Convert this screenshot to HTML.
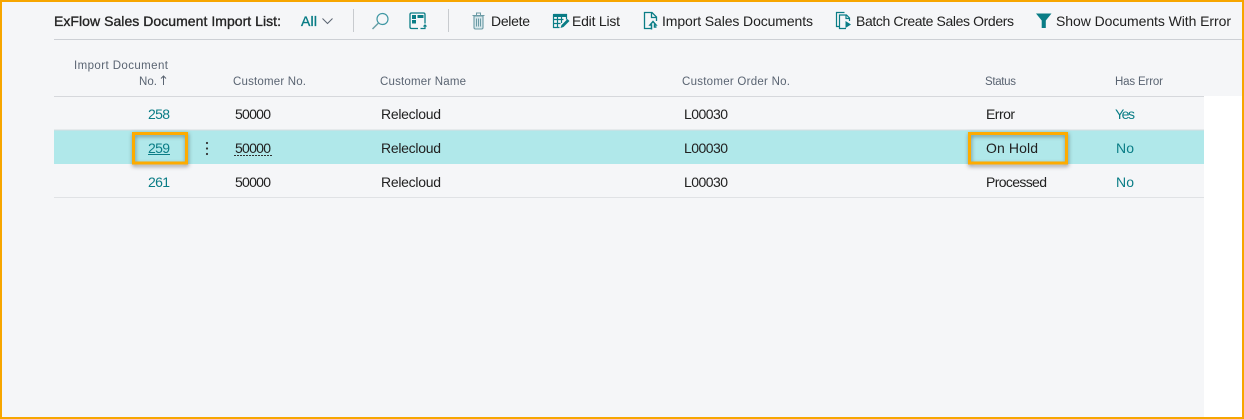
<!DOCTYPE html>
<html><head><meta charset="utf-8"><title>ExFlow Sales Document Import List</title>
<style>
html,body{margin:0;padding:0;width:1244px;height:419px;overflow:hidden;background:#f5f6f8}
svg{display:block}
text{font-family:"Liberation Sans",sans-serif;font-size:14px;fill:#212121}
.h{font-size:11.5px;fill:#5a6472}
.t{fill:#0a7d86}
.b{fill:none;stroke:#0a7d86;stroke-width:1.2}
.sb{stroke:#252525;stroke-width:.35px;fill:#252525}
.sbt{stroke:#0a7d86;stroke-width:.35px;fill:#0a7d86}
</style></head><body>
<svg width="1244" height="419" viewBox="0 0 1244 419" xmlns="http://www.w3.org/2000/svg">
<defs><filter id="s" x="-20%" y="-30%" width="140%" height="170%"><feGaussianBlur stdDeviation="2"/></filter></defs>
<rect width="1244" height="419" fill="#f5f6f8"/>
<rect x="1204" y="96" width="40" height="323" fill="#fff"/>
<rect x="54" y="39" width="1190" height="1" fill="#cdd0d5"/>
<rect x="54" y="96" width="1150" height="1" fill="#d6d8dc"/>
<rect x="54" y="130" width="1150" height="34" fill="#b0e8ea"/>
<rect x="54" y="129.500" width="1150" height="1" fill="#d8dde0"/>
<rect x="54" y="197" width="1150" height="1" fill="#e0e2e5"/>

<text class="sb" x="54" y="26" textLength="227" lengthAdjust="spacing">ExFlow Sales Document Import List:</text>
<text class="sbt" x="301" y="26" textLength="16" lengthAdjust="spacing">All</text>
<path d="M322.500 18.500l5 5 5-5" fill="none" stroke="#5a6472" stroke-width="1"/>
<rect x="353" y="9" width="1" height="23" fill="#c8cbcf"/>
<rect x="448" y="9" width="1" height="23" fill="#c8cbcf"/>

<!-- search -->
<circle cx="382.500" cy="19" r="5.500" fill="none" stroke="#3f97a3" stroke-width="1.200"/>
<path d="M378.500 23l-6 6" stroke="#6aa0a8" stroke-width="1.500" fill="none"/>
<!-- layout icon -->
<path class="b" style="stroke-width:1.300" d="M418 28.500h-6.500q-1.500 0-1.500-1.500v-12.500q0-1.500 1.500-1.500h12q1.500 0 1.500 1.500v9"/>
<rect x="412" y="15" width="4" height="4" fill="#0a7d86"/>
<rect x="412" y="20" width="4" height="3.500" fill="#0a7d86"/>
<rect x="417.500" y="15" width="6" height="3" fill="#0a7d86"/>
<path class="b" d="M420.500 28.500h4.500v-3M423.500 26.500l1.500-1.500 1.500 1.500"/>
<!-- trash -->
<path d="M474 16h9v11.500q0 1.500-1.500 1.500h-6q-1.500 0-1.500-1.500z" fill="#d6e6ea" stroke="#6a9aa5" stroke-width="1.100"/>
<path d="M472.500 15.500h12M476.500 15v-2h4v2M476.500 18.500v8M478.500 18.500v8M480.500 18.500v8" fill="none" stroke="#6a9aa5" stroke-width="1"/>
<text x="491" y="26" textLength="39" lengthAdjust="spacing">Delete</text>
<!-- edit list -->
<rect x="553" y="14" width="13" height="3" fill="#0a7d86"/>
<path class="b" d="M553.500 14.500h13v5M553.500 14.500v13h6M553.500 19.500h10M553.500 23.500h7M557.500 17v10M561.500 17v6"/>
<path d="M560.500 28l1-3 6-6 2 2-6 6z" fill="#0a7d86"/>
<text x="572" y="26" textLength="48" lengthAdjust="spacing">Edit List</text>
<!-- import -->
<path class="b" style="stroke-width:1.300" d="M652 28.500h-7.500v-16h7.500l4.500 4.500v4M651.500 12.500v5h5"/>
<path d="M651.500 29.500v-4.500h-1.500l3-3.500 3 3.500h-1.500v2h2" fill="none" stroke="#0a7d86" stroke-width="1.500"/>
<text x="662" y="26" textLength="151" lengthAdjust="spacing">Import Sales Documents</text>
<!-- batch -->
<path class="b" d="M839 26.500h-2.500v-14h8"/>
<path class="b" d="M846 28.500h-6.500v-13.500h7l3 3v3M846 15v3.500h4"/>
<path d="M845.500 21l5.500 3.500-5.500 3.500z" fill="#0a7d86"/>
<text x="856" y="26" textLength="158" lengthAdjust="spacing">Batch Create Sales Orders</text>
<!-- funnel -->
<path d="M1036 13.500h15.500l-5.700 7v7.500h-4.100v-7.500z" fill="#0a7d86"/>
<text x="1056" y="26" textLength="175" lengthAdjust="spacing">Show Documents With Error</text>

<!-- headers -->
<text class="h" x="74" y="69" textLength="94" lengthAdjust="spacing">Import Document</text>
<text class="h" x="139" y="85" textLength="18" lengthAdjust="spacing">No.</text>
<path d="M163.500 85v-9M161 78.500l2.500-2.500 2.500 2.500" fill="none" stroke="#5a6472" stroke-width="1"/>
<text class="h" x="233" y="85" textLength="73" lengthAdjust="spacing">Customer No.</text>
<text class="h" x="380" y="85" textLength="86" lengthAdjust="spacing">Customer Name</text>
<text class="h" x="682" y="85" textLength="108" lengthAdjust="spacing">Customer Order No.</text>
<text class="h" x="985" y="85" textLength="31" lengthAdjust="spacing">Status</text>
<text class="h" x="1115" y="85" textLength="48" lengthAdjust="spacing">Has Error</text>

<!-- rows -->
<text class="t" x="148" y="119" textLength="22" lengthAdjust="spacing">258</text>
<text x="235" y="119" textLength="36" lengthAdjust="spacing">50000</text>
<text x="381" y="119" textLength="60" lengthAdjust="spacing">Relecloud</text>
<text x="684" y="119" textLength="44" lengthAdjust="spacing">L00030</text>
<text x="986" y="119" textLength="29" lengthAdjust="spacing">Error</text>
<text class="t" x="1115" y="119" textLength="20" lengthAdjust="spacing">Yes</text>

<text class="t" x="148" y="153" textLength="22" lengthAdjust="spacing">259</text>
<rect x="148" y="154" width="22" height="1" fill="#0a7d86"/>
<circle cx="207" cy="143" r="1.100" fill="#333"/><circle cx="207" cy="148.500" r="1.100" fill="#333"/><circle cx="207" cy="154" r="1.100" fill="#333"/>
<text x="235" y="153" textLength="36" lengthAdjust="spacing">50000</text>
<path d="M234 155.500h38" stroke="#333" stroke-width="1" stroke-dasharray="2 1" fill="none"/>
<text x="381" y="153" textLength="60" lengthAdjust="spacing">Relecloud</text>
<text x="684" y="153" textLength="44" lengthAdjust="spacing">L00030</text>
<text x="986" y="153" textLength="52" lengthAdjust="spacing">On Hold</text>
<text class="t" x="1116" y="153" textLength="18" lengthAdjust="spacing">No</text>

<text class="t" x="148" y="187" textLength="22" lengthAdjust="spacing">261</text>
<text x="235" y="187" textLength="36" lengthAdjust="spacing">50000</text>
<text x="381" y="187" textLength="60" lengthAdjust="spacing">Relecloud</text>
<text x="684" y="187" textLength="44" lengthAdjust="spacing">L00030</text>
<text x="986" y="187" textLength="61" lengthAdjust="spacing">Processed</text>
<text class="t" x="1116" y="187" textLength="18" lengthAdjust="spacing">No</text>

<!-- callouts -->
<rect x="134" y="135" width="53" height="30" fill="none" stroke="#000" stroke-opacity=".4" stroke-width="3" filter="url(#s)"/>
<rect x="970" y="135" width="97" height="30" fill="none" stroke="#000" stroke-opacity=".4" stroke-width="3" filter="url(#s)"/>
<rect x="133.500" y="133.500" width="53" height="29.500" fill="none" stroke="#fdab00" stroke-width="3"/>
<rect x="969.500" y="133.500" width="97" height="29.500" fill="none" stroke="#fdab00" stroke-width="3"/>

<!-- outer border -->
<rect x="1" y="1" width="1242" height="417" fill="none" stroke="#f7a600" stroke-width="2"/>
</svg>
</body></html>
